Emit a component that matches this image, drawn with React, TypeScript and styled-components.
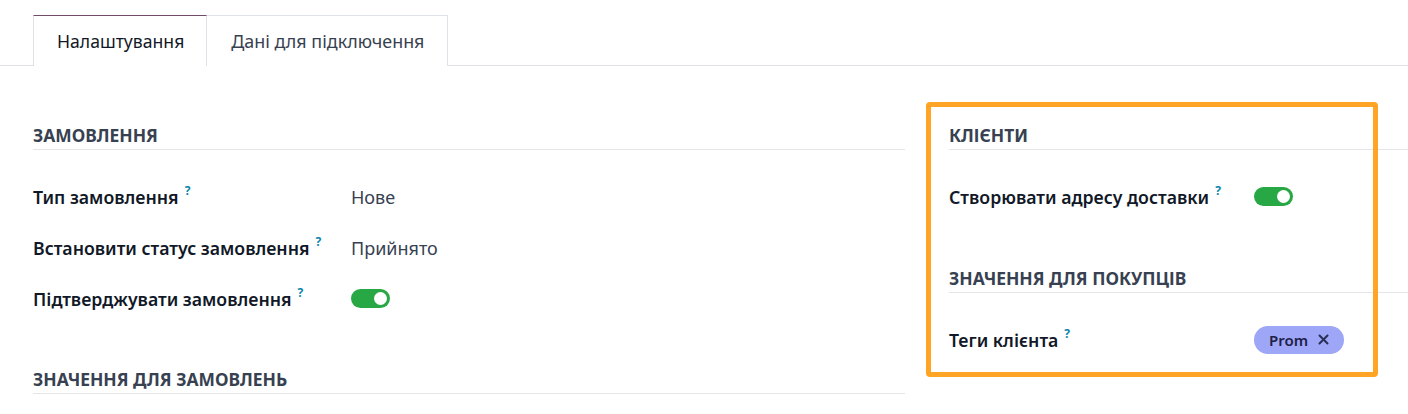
import React from "react";
import styled, { createGlobalStyle } from "styled-components";

const GlobalStyle = createGlobalStyle`
  html, body {
    margin: 0;
    padding: 0;
    background: #ffffff;
  }
  body {
    font-family: "Noto Sans", "Open Sans", sans-serif;
    color: #1f2937;
    font-size: 16px;
  }
`;

const Page = styled.div`
  width: 1408px;
  height: 414px;
  overflow: hidden;
  padding-top: 15px;
  box-sizing: border-box;
`;

const TabBar = styled.nav`
  display: flex;
  padding-left: 33px;
  border-bottom: 1px solid #dee2e6;
`;

const Tab = styled.div<{ $active?: boolean }>`
  height: 51px;
  box-sizing: border-box;
  display: flex;
  align-items: center;
  padding: 0 ${(p) => (p.$active ? "22px 0 23px" : "23px 0 24px")};
  border: 1px solid #dee2e6;
  border-top: 1px solid ${(p) => (p.$active ? "#714b67" : "#dee2e6")};
  border-bottom: none;
  margin-bottom: -1px;
  background: #ffffff;
  font-size: ${(p) => (p.$active ? 17.6 : 17.9)}px;
  color: ${(p) => (p.$active ? "#111827" : "#374151")};
  & + & {
    border-left: none;
  }
`;

const Content = styled.div`
  display: grid;
  grid-template-columns: 872px 1fr;
  column-gap: 44px;
  padding: 58px 0 0 33px;
`;

const Column = styled.section`
  position: relative;
  display: flex;
  flex-direction: column;
`;

const SectionTitle = styled.h3<{ $gap?: number }>`
  margin: ${(p) => p.$gap ?? 0}px 0 0 0;
  padding-bottom: 3px;
  line-height: 22px;
  font-size: 17.4px;
  font-weight: 700;
  text-transform: uppercase;
  color: #374151;
  border-bottom: 1px solid #e3e5e8;
`;

const Rows = styled.div`
  margin-top: 21px;
  display: flex;
  flex-direction: column;
`;

const Row = styled.div<{ $labelWidth: number }>`
  height: 51px;
  display: grid;
  grid-template-columns: ${(p) => p.$labelWidth}px 1fr;
  align-items: center;
`;

const Label = styled.div`
  font-size: 17.7px;
  font-weight: 600;
  color: #111827;
  white-space: nowrap;
`;

const Help = styled.sup`
  margin-left: 6px;
  font-size: 12px;
  font-weight: 700;
  color: #0a85ad;
  position: relative;
  top: -2px;
`;

const Value = styled.div`
  font-size: 18px;
  color: #374151;
`;

const Toggle = styled.div<{ $on?: boolean }>`
  width: 39px;
  height: 19px;
  border-radius: 10px;
  background: ${(p) => (p.$on ? "#28a745" : "#d1d5db")};
  display: flex;
  align-items: center;
  justify-content: flex-end;
  padding: 0 3px;
  box-sizing: border-box;
  &::after {
    content: "";
    width: 13px;
    height: 13px;
    border-radius: 50%;
    background: #ffffff;
  }
`;

const TagBox = styled.div`
  display: flex;
`;

const Tag = styled.span`
  display: inline-flex;
  align-items: center;
  gap: 10px;
  height: 28px;
  padding: 0 15px;
  border-radius: 14px;
  background: #9ea6f7;
  color: #1e2147;
  font-size: 15px;
  font-weight: 600;
`;

const Highlight = styled.div`
  position: absolute;
  left: -23px;
  top: -22px;
  width: 452px;
  height: 275px;
  box-sizing: border-box;
  border: 5px solid #ffa424;
  border-radius: 4px;
  pointer-events: none;
`;

const Field: React.FC<{ label: string; width: number; children: React.ReactNode }> = ({
  label,
  width,
  children,
}) => (
  <Row $labelWidth={width}>
    <Label>
      {label}
      <Help>?</Help>
    </Label>
    <div>{children}</div>
  </Row>
);

export default function App() {
  return (
    <>
      <GlobalStyle />
      <Page>
        <TabBar>
          <Tab $active>Налаштування</Tab>
          <Tab>Дані для підключення</Tab>
        </TabBar>
        <Content>
          <Column>
            <SectionTitle>Замовлення</SectionTitle>
            <Rows>
              <Field label="Тип замовлення" width={318}>
                <Value>Нове</Value>
              </Field>
              <Field label="Встановити статус замовлення" width={318}>
                <Value>Прийнято</Value>
              </Field>
              <Field label="Підтверджувати замовлення" width={318}>
                <Toggle $on />
              </Field>
            </Rows>
            <SectionTitle $gap={44}>Значення для замовлень</SectionTitle>
          </Column>
          <Column>
            <Highlight />
            <SectionTitle>Клієнти</SectionTitle>
            <Rows>
              <Field label="Створювати адресу доставки" width={305}>
                <Toggle $on />
              </Field>
            </Rows>
            <SectionTitle $gap={45}>Значення для покупців</SectionTitle>
            <Rows>
              <Field label="Теги клієнта" width={305}>
                <TagBox>
                  <Tag>
                    Prom
                    <svg width="11" height="11" viewBox="0 0 11 11" aria-hidden>
                      <path d="M1.5 1.5 L9.5 9.5 M9.5 1.5 L1.5 9.5" stroke="#2a2f55" strokeWidth="2" strokeLinecap="round" />
                    </svg>
                  </Tag>
                </TagBox>
              </Field>
            </Rows>
          </Column>
        </Content>
      </Page>
    </>
  );
}
